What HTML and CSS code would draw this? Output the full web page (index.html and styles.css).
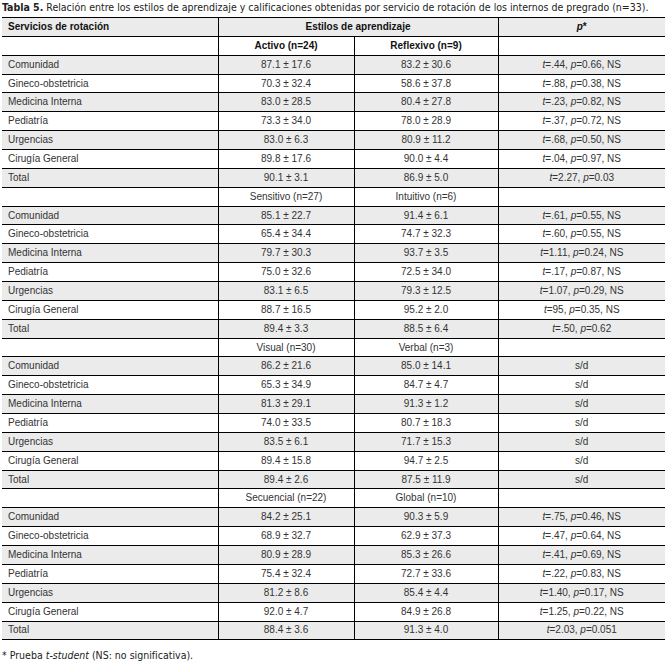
FILE: index.html
```html
<!DOCTYPE html>
<html lang="es">
<head>
<meta charset="utf-8">
<link rel="stylesheet" href="styles.css">
</head>
<body>
<p class="caption"><b>Tabla 5.</b> Relación entre los estilos de aprendizaje y calificaciones obtenidas por servicio de rotación de los internos de pregrado (n=33).</p>
<table class="tbl">
<colgroup><col class="c1"><col class="c2"><col class="c3"><col class="c4"></colgroup>
<tr class="head"><th class="lab">Servicios de rotación</th><th colspan="2">Estilos de aprendizaje</th><th><i>p</i>*</th></tr>
<tr class="sub"><td></td><td class="b">Activo (n=24)</td><td class="b">Reflexivo (n=9)</td><td></td></tr>
<tr class="g"><td class="lab">Comunidad</td><td>87.1 ± 17.6</td><td>83.2 ± 30.6</td><td><i>t</i>=.44, <i>p</i>=0.66, NS</td></tr>
<tr><td class="lab">Gineco-obstetricia</td><td>70.3 ± 32.4</td><td>58.6 ± 37.8</td><td><i>t</i>=.88, <i>p</i>=0.38, NS</td></tr>
<tr class="g"><td class="lab">Medicina Interna</td><td>83.0 ± 28.5</td><td>80.4 ± 27.8</td><td><i>t</i>=.23, <i>p</i>=0.82, NS</td></tr>
<tr><td class="lab">Pediatría</td><td>73.3 ± 34.0</td><td>78.0 ± 28.9</td><td><i>t</i>=.37, <i>p</i>=0.72, NS</td></tr>
<tr class="g"><td class="lab">Urgencias</td><td>83.0 ± 6.3</td><td>80.9 ± 11.2</td><td><i>t</i>=.68, <i>p</i>=0.50, NS</td></tr>
<tr><td class="lab">Cirugía General</td><td>89.8 ± 17.6</td><td>90.0 ± 4.4</td><td><i>t</i>=.04, <i>p</i>=0.97, NS</td></tr>
<tr class="g"><td class="lab">Total</td><td>90.1 ± 3.1</td><td>86.9 ± 5.0</td><td><i>t</i>=2.27, <i>p</i>=0.03</td></tr>
<tr class="sub"><td></td><td>Sensitivo (n=27)</td><td>Intuitivo (n=6)</td><td></td></tr>
<tr class="g"><td class="lab">Comunidad</td><td>85.1 ± 22.7</td><td>91.4 ± 6.1</td><td><i>t</i>=.61, <i>p</i>=0.55, NS</td></tr>
<tr><td class="lab">Gineco-obstetricia</td><td>65.4 ± 34.4</td><td>74.7 ± 32.3</td><td><i>t</i>=.60, <i>p</i>=0.55, NS</td></tr>
<tr class="g"><td class="lab">Medicina Interna</td><td>79.7 ± 30.3</td><td>93.7 ± 3.5</td><td><i>t</i>=1.11, <i>p</i>=0.24, NS</td></tr>
<tr><td class="lab">Pediatría</td><td>75.0 ± 32.6</td><td>72.5 ± 34.0</td><td><i>t</i>=.17, <i>p</i>=0.87, NS</td></tr>
<tr class="g"><td class="lab">Urgencias</td><td>83.1 ± 6.5</td><td>79.3 ± 12.5</td><td><i>t</i>=1.07, <i>p</i>=0.29, NS</td></tr>
<tr><td class="lab">Cirugía General</td><td>88.7 ± 16.5</td><td>95.2 ± 2.0</td><td><i>t</i>=95, <i>p</i>=0.35, NS</td></tr>
<tr class="g"><td class="lab">Total</td><td>89.4 ± 3.3</td><td>88.5 ± 6.4</td><td><i>t</i>=.50, <i>p</i>=0.62</td></tr>
<tr class="sub"><td></td><td>Visual (n=30)</td><td>Verbal (n=3)</td><td></td></tr>
<tr class="g"><td class="lab">Comunidad</td><td>86.2 ± 21.6</td><td>85.0 ± 14.1</td><td>s/d</td></tr>
<tr><td class="lab">Gineco-obstetricia</td><td>65.3 ± 34.9</td><td>84.7 ± 4.7</td><td>s/d</td></tr>
<tr class="g"><td class="lab">Medicina Interna</td><td>81.3 ± 29.1</td><td>91.3 ± 1.2</td><td>s/d</td></tr>
<tr><td class="lab">Pediatría</td><td>74.0 ± 33.5</td><td>80.7 ± 18.3</td><td>s/d</td></tr>
<tr class="g"><td class="lab">Urgencias</td><td>83.5 ± 6.1</td><td>71.7 ± 15.3</td><td>s/d</td></tr>
<tr><td class="lab">Cirugía General</td><td>89.4 ± 15.8</td><td>94.7 ± 2.5</td><td>s/d</td></tr>
<tr class="g"><td class="lab">Total</td><td>89.4 ± 2.6</td><td>87.5 ± 11.9</td><td>s/d</td></tr>
<tr class="sub"><td></td><td>Secuencial (n=22)</td><td>Global (n=10)</td><td></td></tr>
<tr class="g"><td class="lab">Comunidad</td><td>84.2 ± 25.1</td><td>90.3 ± 5.9</td><td><i>t</i>=.75, <i>p</i>=0.46, NS</td></tr>
<tr><td class="lab">Gineco-obstetricia</td><td>68.9 ± 32.7</td><td>62.9 ± 37.3</td><td><i>t</i>=.47, <i>p</i>=0.64, NS</td></tr>
<tr class="g"><td class="lab">Medicina Interna</td><td>80.9 ± 28.9</td><td>85.3 ± 26.6</td><td><i>t</i>=.41, <i>p</i>=0.69, NS</td></tr>
<tr><td class="lab">Pediatría</td><td>75.4 ± 32.4</td><td>72.7 ± 33.6</td><td><i>t</i>=.22, <i>p</i>=0.83, NS</td></tr>
<tr class="g"><td class="lab">Urgencias</td><td>81.2 ± 8.6</td><td>85.4 ± 4.4</td><td><i>t</i>=1.40, <i>p</i>=0.17, NS</td></tr>
<tr><td class="lab">Cirugía General</td><td>92.0 ± 4.7</td><td>84.9 ± 26.8</td><td><i>t</i>=1.25, <i>p</i>=0.22, NS</td></tr>
<tr class="g"><td class="lab">Total</td><td>88.4 ± 3.6</td><td>91.3 ± 4.0</td><td><i>t</i>=2.03, <i>p</i>=0.051</td></tr>
</table>
<p class="foot">* Prueba <i>t-student</i> (NS: no significativa).</p>
</body>
</html>
```
FILE: styles.css
```css
html, body {
  margin: 0;
  padding: 0;
  background: #fff;
}
body {
  padding: 0 0 0 2px;
  color: #2a2a2a;
}
.caption {
  margin: 1px 0 4px 0;
  font-family: "DejaVu Sans Condensed", "DejaVu Sans", sans-serif;
  font-size: 10.5px;
  line-height: 12px;
  color: #222;
  white-space: nowrap;
}
.tbl {
  border-collapse: collapse;
  width: 663px;
  table-layout: fixed;
  font-family: "Liberation Sans Narrow", "Liberation Sans", sans-serif;
  font-size: 10px;
  color: #333;
}
.c1 { width: 216px; }
.c2 { width: 136px; }
.c3 { width: 144px; }
.c4 { width: 167px; }
.tbl tr { height: 18.87px; }
.tbl td, .tbl th {
  border-top: 1px solid #000;
  border-bottom: 1px solid #000;
  border-left: 1px solid #000;
  padding: 0 4px;
  text-align: center;
  white-space: nowrap;
  line-height: 12px;
}
.tbl td:first-child, .tbl th:first-child {
  border-left: none;
}
.tbl th {
  font-weight: bold;
  color: #111;
}
.tbl .lab {
  text-align: left;
  padding-left: 6px;
}
.head, .g {
  background: #ebebeb;
}
.b {
  font-weight: bold;
  color: #111;
}
.foot {
  margin: 9px 0 0 0;
  font-family: "DejaVu Sans Condensed", "DejaVu Sans", sans-serif;
  font-size: 10.5px;
  line-height: 12px;
  color: #222;
}
```
